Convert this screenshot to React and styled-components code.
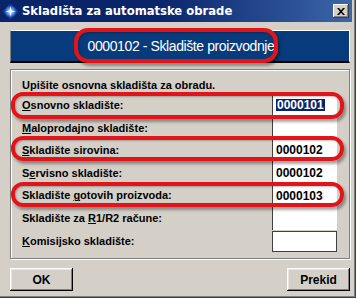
import { Fragment } from "react";
import styled, { createGlobalStyle } from "styled-components";

const GlobalStyle = createGlobalStyle`
  html, body {
    margin: 0;
    padding: 0;
    background: #d4d0c8;
  }
  * {
    box-sizing: border-box;
  }
`;

const Window = styled.div`
  position: relative;
  width: 356px;
  height: 298px;
  padding: 0 4px 4px 0;
  background: #d4d0c8;
  font-family: "Liberation Sans", Arial, sans-serif;
  box-shadow: inset -1px -1px 0 #404040, inset -2px -2px 0 #808080;
  overflow: hidden;
`;

const TitleBar = styled.div`
  height: 22px;
  display: flex;
  align-items: center;
  padding: 0 2px 0 2px;
  background: linear-gradient(90deg, #0a246a 0%, #0a246a 45%, #3b66a8 100%);
  color: #fff;
`;

const TitleText = styled.span`
  flex: 1;
  margin-left: 3px;
  font-family: "DejaVu Sans", Verdana, sans-serif;
  font-weight: bold;
  font-size: 11.6px;
`;

const CloseButton = styled.div`
  width: 16px;
  height: 14px;
  margin-right: 1px;
  display: flex;
  align-items: center;
  justify-content: center;
  background: #d4d0c8;
  box-shadow: inset -1px -1px 0 #404040, inset 1px 1px 0 #fff,
    inset -2px -2px 0 #808080;
`;

const Body = styled.div`
  padding: 8px 2px 0 10px;
  display: flex;
  flex-direction: column;
`;

const Banner = styled.div`
  height: 33px;
  display: flex;
  align-items: center;
  justify-content: center;
  background: #083b7c;
  border-top: 1px solid #fff;
  border-right: 1px solid #fff;
  border-left: 1px solid #808080;
  border-bottom: 2px solid #000;
  color: #fff;
  font-size: 14px;
  letter-spacing: -0.4px;
  padding-left: 2px;
`;

const Group = styled.div`
  margin-top: 6px;
  height: 190px;
  border: 1px solid #808080;
  box-shadow: inset 1px 1px 0 #fff, 1px 1px 0 #fff;
  padding: 9px 12px 0 11px;
`;

const Heading = styled.div`
  font-weight: bold;
  font-size: 11px;
  line-height: 13px;
  color: #000;
  margin-bottom: 2px;
`;

const Rows = styled.div`
  display: grid;
  grid-template-columns: 1fr 65px;
  grid-auto-rows: 22.6px;
`;

const Label = styled.div`
  font-weight: bold;
  font-size: 11px;
  line-height: 22.6px;
  color: #000;
  white-space: nowrap;

  u {
    text-decoration-thickness: 1px;
    text-underline-offset: 1px;
  }
`;

const Field = styled.div`
  display: flex;
  align-items: center;
  padding-left: 3px;
  background: #fff;
  font-weight: bold;
  font-size: 12px;
  color: #000;
  border-left: 1px solid #404040;
  ${(p) =>
    p.$boxed &&
    `
    margin-top: 1px;
    height: 21px;
    border: 1px solid #404040;
  `}
`;

const Selected = styled.span`
  background: #0a246a;
  color: #fff;
  padding: 0 1px;
  line-height: 12px;
`;

const Buttons = styled.div`
  margin-top: 9px;
  display: flex;
  justify-content: space-between;
`;

const Button = styled.div`
  width: 63px;
  height: 23px;
  display: flex;
  align-items: center;
  justify-content: center;
  font-weight: bold;
  font-size: 12px;
  color: #000;
  background: #d4d0c8;
  box-shadow: inset -1px -1px 0 #000, inset 1px 1px 0 #fff,
    inset -2px -2px 0 #808080, inset 2px 2px 0 #e8e6e0;
`;

const Mark = styled.div`
  position: absolute;
  left: ${(p) => p.$x}px;
  top: ${(p) => p.$y}px;
  width: ${(p) => p.$w}px;
  height: ${(p) => p.$h}px;
  border: 4px solid #e1141a;
  border-radius: ${(p) => p.$r}px;
  box-shadow: 2px 3px 3px rgba(0, 0, 0, 0.35),
    inset 1px 1px 2px rgba(0, 0, 0, 0.25);
  pointer-events: none;
`;

const AppIcon = () => (
  <svg width="17" height="17" viewBox="0 0 17 17">
    <defs>
      <radialGradient id="gem" cx="50%" cy="50%" r="50%">
        <stop offset="0%" stopColor="#ffffff" />
        <stop offset="35%" stopColor="#8fc4ff" />
        <stop offset="100%" stopColor="#0a3aa8" />
      </radialGradient>
    </defs>
    <path d="M8.5 0.5 L16.5 8.5 L8.5 16.5 L0.5 8.5 Z" fill="#1c3f9a" />
    <circle cx="8.5" cy="8.5" r="6" fill="url(#gem)" />
    <path
      d="M8.5 3 L9.3 7.7 L14 8.5 L9.3 9.3 L8.5 14 L7.7 9.3 L3 8.5 L7.7 7.7 Z"
      fill="#fff"
    />
  </svg>
);

const CloseIcon = () => (
  <svg width="8" height="7" viewBox="0 0 8 7">
    <path
      d="M0 0 H2 L4 2.2 L6 0 H8 L5 3.5 L8 7 H6 L4 4.8 L2 7 H0 L3 3.5 Z"
      fill="#000"
    />
  </svg>
);

const rows = [
  { label: <><u>O</u>snovno skladište:</>, value: <Selected>0000101</Selected> },
  { label: <><u>M</u>aloprodajno skladište:</>, value: null },
  { label: <><u>S</u>kladište sirovina:</>, value: "0000102" },
  { label: <>S<u>e</u>rvisno skladište:</>, value: "0000102" },
  { label: <>Skladište{" "}<u>g</u>otovih proizvoda:</>, value: "0000103" },
  { label: <>Skladište za{" "}<u>R</u>1/R2 račune:</>, value: null },
  { label: <><u>K</u>omisijsko skladište:</>, value: null, boxed: true },
];

export default function App() {
  return (
    <>
      <GlobalStyle />
      <Window>
        <TitleBar>
          <AppIcon />
          <TitleText>Skladišta za automatske obrade</TitleText>
          <CloseButton>
            <CloseIcon />
          </CloseButton>
        </TitleBar>
        <Body>
          <Banner>0000102 - Skladište proizvodnje</Banner>
          <Group>
            <Heading>Upišite osnovna skladišta za obradu.</Heading>
            <Rows>
              {rows.map((r, i) => (
                <Fragment key={i}>
                  <Label>{r.label}</Label>
                  <Field $boxed={r.boxed}>{r.value}</Field>
                </Fragment>
              ))}
            </Rows>
          </Group>
          <Buttons>
            <Button>OK</Button>
            <Button>Prekid</Button>
          </Buttons>
        </Body>
        <Mark $x={74} $y={28} $w={204} $h={35} $r={14} />
        <Mark $x={11} $y={92} $w={333} $h={27} $r={12} />
        <Mark $x={11} $y={136} $w={333} $h={25} $r={12} />
        <Mark $x={11} $y={182} $w={333} $h={25} $r={12} />
      </Window>
    </>
  );
}
